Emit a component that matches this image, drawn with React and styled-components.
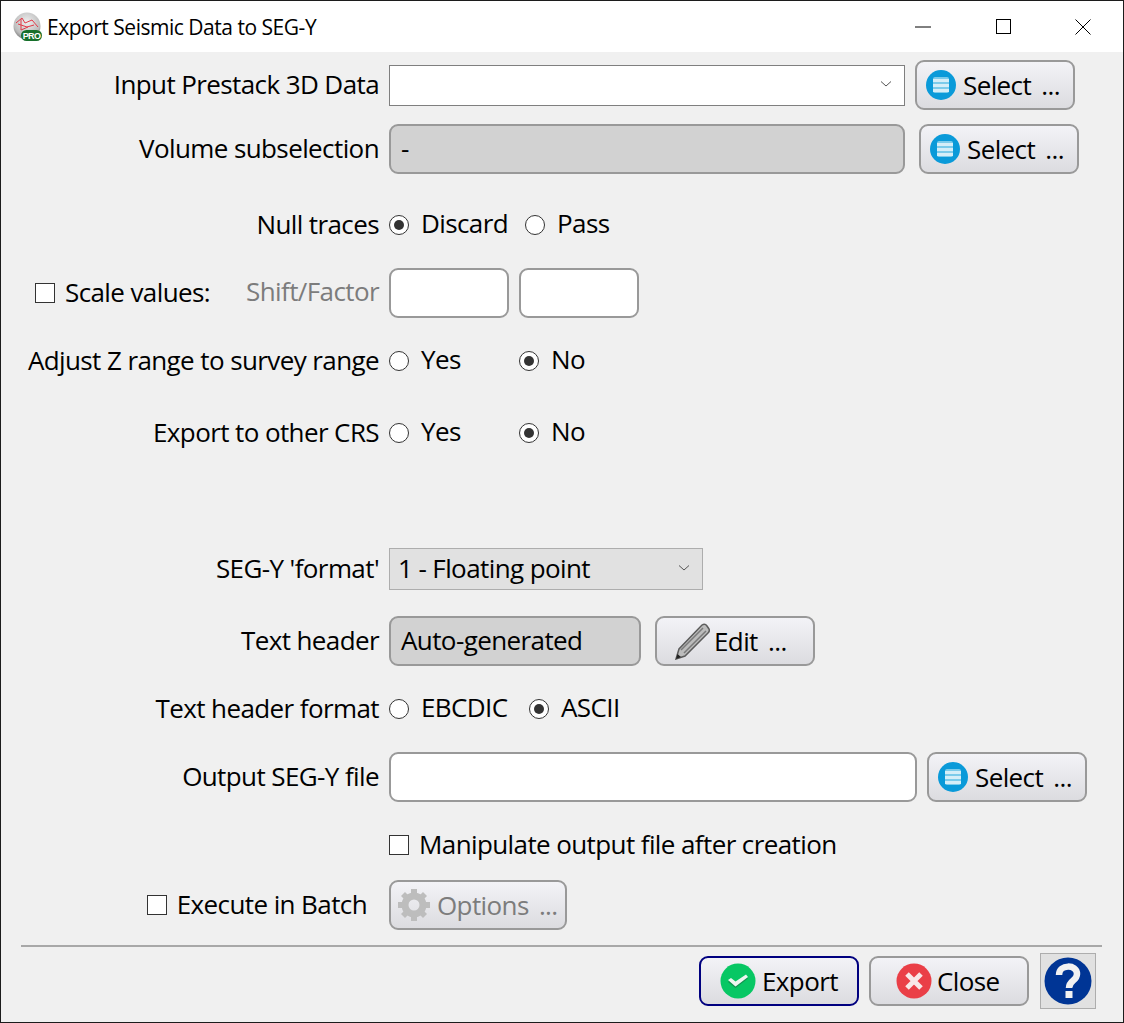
import React from "react";
import styled, { createGlobalStyle } from "styled-components";

const GlobalStyle = createGlobalStyle`
  html, body {
    margin: 0;
    padding: 0;
    background: #f0f0f0;
  }
  * {
    box-sizing: border-box;
  }
`;

const Window = styled.div`
  width: 1124px;
  height: 1023px;
  display: flex;
  flex-direction: column;
  border: 1px solid #1c1c1c;
  background: #f0f0f0;
  color: #000;
  font-family: "Open Sans", "Noto Sans", sans-serif;
  font-size: 26px;
  font-stretch: 90%;
  letter-spacing: -0.6px;
  overflow: hidden;
`;

const TitleBar = styled.header`
  height: 51px;
  flex: none;
  display: flex;
  align-items: center;
  background: #fff;
  padding-left: 12px;
`;

const TitleText = styled.span`
  margin-left: 5px;
  font-size: 21px;
  letter-spacing: -0.48px;
`;

const WindowControls = styled.div`
  margin-left: auto;
  display: flex;
`;

const WindowButton = styled.div`
  width: 80px;
  height: 51px;
  display: grid;
  place-items: center;
`;

const Form = styled.main`
  display: flex;
  flex-direction: column;
  padding-top: 8px;
`;

const Row = styled.div`
  display: grid;
  grid-template-columns: 378px 1fr;
  grid-template-rows: ${(p) => p.$h}px;
  column-gap: 10px;
  align-items: center;
  height: ${(p) => p.$h}px;
  margin-top: ${(p) => p.$mt || 0}px;
`;

const Label = styled.div`
  display: flex;
  align-items: center;
  justify-content: ${(p) => p.$justify || "flex-end"};
  padding-left: ${(p) => p.$pl || 0}px;
  padding-right: ${(p) => p.$pr || 0}px;
  padding-bottom: ${(p) => p.$pb ?? 3}px;
  white-space: nowrap;
`;

const Muted = styled.span`
  position: relative;
  top: -2px;
  color: #7c7c7c;
`;

const Fields = styled.div`
  display: flex;
  align-items: center;
  gap: ${(p) => p.$gap ?? 10}px;
`;

const ComboBox = styled.div`
  width: ${(p) => p.$w}px;
  height: ${(p) => p.$h}px;
  display: flex;
  align-items: center;
  justify-content: space-between;
  padding: 0 12px 2px 8px;
  background: ${(p) => (p.$flat ? "#e1e1e1" : "#fff")};
  border: 1px solid ${(p) => (p.$flat ? "#adadad" : "#7f7f7f")};
`;

const Field = styled.div`
  width: ${(p) => p.$w}px;
  height: 50px;
  display: flex;
  align-items: center;
  padding: 0 0 2px 10px;
  background: ${(p) => (p.$disabled ? "#d2d2d2" : "#fff")};
  border: 2px solid #999;
  border-radius: 9px;
`;

const Button = styled.button`
  width: ${(p) => p.$w || 160}px;
  height: 50px;
  display: flex;
  align-items: center;
  justify-content: flex-start;
  gap: ${(p) => p.$gap ?? 7}px;
  padding: 0 0 0 ${(p) => p.$pl ?? 9}px;
  font: inherit;
  font-stretch: inherit;
  letter-spacing: inherit;
  word-spacing: 4px;
  color: ${(p) => (p.$disabled ? "#7c7c7c" : "#000")};
  background: linear-gradient(#f3f3f7, #dcdce0);
  border: 2px solid ${(p) => (p.$primary ? "#00007f" : "#999")};
  border-radius: 9px;
`;

const Option = styled.label`
  width: ${(p) => (p.$w ? `${p.$w}px` : "auto")};
  display: flex;
  align-items: center;
  gap: ${(p) => p.$gap ?? 12}px;
  white-space: nowrap;
  line-height: 30px;
`;

const OptionText = styled.span`
  position: relative;
  top: ${(p) => p.$top}px;
`;

const Radio = styled.span`
  width: 20px;
  height: 20px;
  flex: none;
  display: grid;
  place-items: center;
  background: #fff;
  border: 1px solid #333;
  border-radius: 50%;

  &::after {
    content: "";
    width: 10px;
    height: 10px;
    border-radius: 50%;
    background: ${(p) => (p.$on ? "#333" : "transparent")};
  }
`;

const Check = styled.span`
  width: 20px;
  height: 20px;
  flex: none;
  background: #fff;
  border: 1px solid #333;
`;

const Divider = styled.hr`
  width: 1081px;
  height: 2px;
  margin: 15px 0 0 20px;
  border: 0;
  background: #a8a8a8;
`;

const Footer = styled.footer`
  display: flex;
  align-items: center;
  height: 56px;
  margin-top: 6px;
  padding-left: 698px;
`;

const FooterButtons = styled.div`
  display: flex;
  gap: 10px;
`;

const HelpButton = styled.div`
  width: 56px;
  height: 56px;
  margin-left: 11px;
  display: grid;
  place-items: center;
  background: #e1e1e1;
  border: 1px solid #adadad;
`;

const Chevron = () => (
  <svg width="12" height="8" viewBox="0 0 12 8">
    <path d="M1 1.5 L6 6 L11 1.5" fill="none" stroke="#555" strokeWidth="1" />
  </svg>
);

const AppIcon = () => (
  <svg width="29" height="29" viewBox="0 0 29 29">
    <defs>
      <radialGradient id="sphere" cx="0.5" cy="0.35" r="0.7">
        <stop offset="0" stopColor="#f0f0f0" />
        <stop offset="0.7" stopColor="#bdbdbd" />
        <stop offset="1" stopColor="#6f6f6f" />
      </radialGradient>
    </defs>
    <circle cx="14" cy="14" r="13.5" fill="url(#sphere)" />
    <path d="M3 11 L9 6 L12 11 L19 8 L25 15 M5 12 L14 15 L21 13 M8 7 L8 18 L15 15" fill="none" stroke="#e23a48" strokeWidth="1" />
    <rect x="8" y="18" width="21" height="11" rx="5.5" fill="#166f2a" />
    <text x="18.5" y="27" fontSize="9" fontWeight="700" fill="#fff" textAnchor="middle" fontFamily="Liberation Sans, sans-serif">PRO</text>
  </svg>
);

const SelectIcon = () => (
  <svg width="30" height="30" viewBox="0 0 30 30">
    <circle cx="15" cy="15" r="15" fill="#0a9ad9" />
    <rect x="7" y="7" width="16" height="16" rx="2" fill="#7ccbea" />
    <g fill="#d5eef8">
      <rect x="7" y="9" width="16" height="3" />
      <rect x="7" y="14" width="16" height="3" />
      <rect x="7" y="19" width="16" height="3" />
    </g>
  </svg>
);

const ExportIcon = () => (
  <svg width="36" height="36" viewBox="0 0 36 36">
    <circle cx="18" cy="18" r="17.5" fill="#07c764" />
    <path d="M8 19 L11 16.5 L15.5 20 L26 13 L28 15.5 L15.5 25 Z" fill="#1b6a3f" opacity="0.55" />
    <path d="M8 17 L11 15 L15.5 18.5 L26 11.5 L28 14 L15.5 23.5 Z" fill="#eef6f1" />
  </svg>
);

const CloseIcon = () => (
  <svg width="36" height="36" viewBox="0 0 36 36">
    <circle cx="18" cy="18" r="17.5" fill="#ea3f47" />
    <path d="M11 11 L25 25 M25 11 L11 25" stroke="#f8e8e8" strokeWidth="5" />
  </svg>
);

const PencilIcon = () => (
  <svg width="36" height="38" viewBox="0 0 36 38">
    <path d="M2 37 L5 27 L28 3 Q31 1 33 4 L35 7 Q36 9 34 11 L11 34 Z" fill="#bcbcbc" stroke="#5c5c5c" strokeWidth="1.5" />
    <path d="M7 28 L29 6 M10 31 L32 9" stroke="#7a7a7a" strokeWidth="1.5" />
    <path d="M2 37 L3.5 32 L7 35 Z" fill="#222" />
  </svg>
);

const GearIcon = () => (
  <svg width="34" height="34" viewBox="0 0 34 34">
    <circle cx="17" cy="17" r="9" fill="none" stroke="#bdbdbd" strokeWidth="7" />
    <path
      d="M14 1 H20 V7 H14 Z M14 27 H20 V33 H14 Z M1 14 H7 V20 H1 Z M27 14 H33 V20 H27 Z M4 8 L8 4 L12 8 L8 12 Z M22 8 L26 4 L30 8 L26 12 Z M4 26 L8 22 L12 26 L8 30 Z M22 26 L26 22 L30 26 L26 30 Z"
      fill="#bdbdbd"
    />
  </svg>
);

const HelpIcon = () => (
  <svg width="48" height="48" viewBox="0 0 48 48">
    <circle cx="24" cy="24" r="23.5" fill="#003595" />
    <path d="M15 18 C15 7 33 7 33 17 C33 24 25 23 25 31" fill="none" stroke="#f2f2f2" strokeWidth="6.5" />
    <rect x="21.5" y="34" width="7" height="7" fill="#f2f2f2" />
  </svg>
);

const Choice = ({ on, w, children }) => (
  <Option $w={w}>
    <Radio $on={on} />
    <OptionText $top={-2}>{children}</OptionText>
  </Option>
);

const Tick = ({ children }) => (
  <Option $gap={10}>
    <Check />
    <OptionText $top={-1}>{children}</OptionText>
  </Option>
);

export default function App() {
  return (
    <Window>
      <GlobalStyle />
      <TitleBar>
        <AppIcon />
        <TitleText>Export Seismic Data to SEG-Y</TitleText>
        <WindowControls>
          <WindowButton>
            <svg width="16" height="2" viewBox="0 0 16 2"><path d="M0 1 H16" stroke="#000" /></svg>
          </WindowButton>
          <WindowButton>
            <svg width="15" height="15" viewBox="0 0 15 15"><rect x="0.5" y="0.5" width="14" height="14" fill="none" stroke="#000" /></svg>
          </WindowButton>
          <WindowButton>
            <svg width="16" height="16" viewBox="0 0 16 16"><path d="M0.5 0.5 L15.5 15.5 M15.5 0.5 L0.5 15.5" stroke="#000" /></svg>
          </WindowButton>
        </WindowControls>
      </TitleBar>

      <Form>
        <Row $h={50}>
          <Label>Input Prestack 3D Data</Label>
          <Fields>
            <ComboBox $w={516} $h={41}><span /><Chevron /></ComboBox>
            <Button><SelectIcon />Select ...</Button>
          </Fields>
        </Row>
        <Row $h={50} $mt={14}>
          <Label>Volume subselection</Label>
          <Fields $gap={14}>
            <Field $w={516} $disabled>-</Field>
            <Button><SelectIcon />Select ...</Button>
          </Fields>
        </Row>
        <Row $h={30} $mt={36}>
          <Label>Null traces</Label>
          <Fields $gap={0}>
            <Choice on w={136}>Discard</Choice>
            <Choice>Pass</Choice>
          </Fields>
        </Row>
        <Row $h={50} $mt={28}>
          <Label $justify="space-between" $pl={34} $pb={0}>
            <Tick>Scale values:</Tick>
            <Muted>Shift/Factor</Muted>
          </Label>
          <Fields>
            <Field $w={120} />
            <Field $w={120} />
          </Fields>
        </Row>
        <Row $h={30} $mt={28}>
          <Label>Adjust Z range to survey range</Label>
          <Fields $gap={0}>
            <Choice w={130}>Yes</Choice>
            <Choice on>No</Choice>
          </Fields>
        </Row>
        <Row $h={30} $mt={42}>
          <Label>Export to other CRS</Label>
          <Fields $gap={0}>
            <Choice w={130}>Yes</Choice>
            <Choice on>No</Choice>
          </Fields>
        </Row>
        <Row $h={42} $mt={100}>
          <Label>SEG-Y 'format'</Label>
          <Fields>
            <ComboBox $w={314} $h={42} $flat>1 - Floating point<Chevron /></ComboBox>
          </Fields>
        </Row>
        <Row $h={50} $mt={26}>
          <Label>Text header</Label>
          <Fields $gap={14}>
            <Field $w={252} $disabled>Auto-generated</Field>
            <Button $pl={17} $gap={4}><PencilIcon />Edit ...</Button>
          </Fields>
        </Row>
        <Row $h={30} $mt={28}>
          <Label>Text header format</Label>
          <Fields $gap={0}>
            <Choice w={140}>EBCDIC</Choice>
            <Choice on>ASCII</Choice>
          </Fields>
        </Row>
        <Row $h={50} $mt={28}>
          <Label>Output SEG-Y file</Label>
          <Fields>
            <Field $w={528} />
            <Button><SelectIcon />Select ...</Button>
          </Fields>
        </Row>
        <Row $h={30} $mt={28}>
          <span />
          <Tick>Manipulate output file after creation</Tick>
        </Row>
        <Row $h={50} $mt={20}>
          <Label $pr={12} $pb={0}>
            <Tick>Execute in Batch</Tick>
          </Label>
          <Fields>
            <Button $w={178} $pl={6} $gap={6} $disabled><GearIcon />Options ...</Button>
          </Fields>
        </Row>
      </Form>

      <Divider />
      <Footer>
        <FooterButtons>
          <Button $primary $pl={19} $gap={6}><ExportIcon />Export</Button>
          <Button $pl={25} $gap={5}><CloseIcon />Close</Button>
        </FooterButtons>
        <HelpButton><HelpIcon /></HelpButton>
      </Footer>
    </Window>
  );
}
